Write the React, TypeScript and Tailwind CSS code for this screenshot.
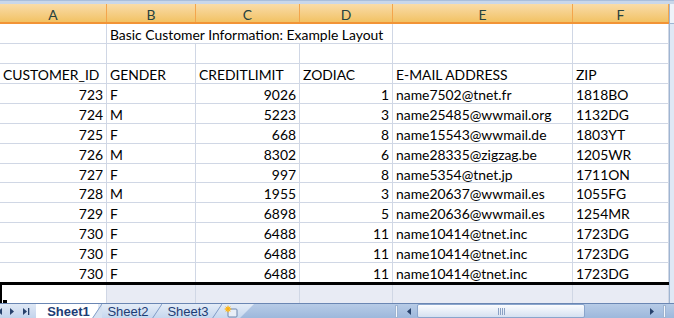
import React from 'react'

const cols = [107, 89, 104, 93, 180, 96]
const letters = ['A', 'B', 'C', 'D', 'E', 'F']

type Row = [number, string, number, number, string, string]

const rows: Row[] = [
  [723, 'F', 9026, 1, 'name7502@tnet.fr', '1818BO'],
  [724, 'M', 5223, 3, 'name25485@wwmail.org', '1132DG'],
  [725, 'F', 668, 8, 'name15543@wwmail.de', '1803YT'],
  [726, 'M', 8302, 6, 'name28335@zigzag.be', '1205WR'],
  [727, 'F', 997, 8, 'name5354@tnet.jp', '1711ON'],
  [728, 'M', 1955, 3, 'name20637@wwmail.es', '1055FG'],
  [729, 'F', 6898, 5, 'name20636@wwmail.es', '1254MR'],
  [730, 'F', 6488, 11, 'name10414@tnet.inc', '1723DG'],
  [730, 'F', 6488, 11, 'name10414@tnet.inc', '1723DG'],
  [730, 'F', 6488, 11, 'name10414@tnet.inc', '1723DG'],
]

const headers = ['CUSTOMER_ID', 'GENDER', 'CREDITLIMIT', 'ZODIAC', 'E-MAIL ADDRESS', 'ZIP']

function Cell({ w, right, children }: { w: number; right?: boolean; children?: React.ReactNode }) {
  return (
    <div
      style={{ width: w }}
      className={`shrink-0 h-full flex items-end pb-[1px] whitespace-nowrap overflow-hidden px-[3px] border-r border-[#d0d7e5] ${right ? 'justify-end' : ''}`}
    >
      {children}
    </div>
  )
}

function GridRow({ values, last }: { values: (string | number)[]; last?: boolean }) {
  return (
    <div className={`flex ${last ? 'h-[19px]' : 'h-[20px] border-b border-[#d0d7e5]'}`}>
      {values.map((v, i) => (
        <Cell key={i} w={cols[i]} right={typeof v === 'number'}>{v}</Cell>
      ))}
    </div>
  )
}

function Arrow({ dir, bar }: { dir: 'l' | 'r'; bar?: boolean }) {
  return (
    <svg width="8" height="9" viewBox="0 0 8 9">
      {dir === 'r' ? <path d="M1 1 L5 4.5 L1 8 Z" fill="#27416b" /> : <path d="M6 1 L2 4.5 L6 8 Z" fill="#27416b" />}
      {bar && <rect x="6" y="1" width="1.3" height="7" fill="#27416b" />}
    </svg>
  )
}

export default function App() {
  return (
    <div className="w-[674px] h-[318px] overflow-hidden bg-white text-black font-['Lato',sans-serif] text-[13.9px] leading-none">
      <div className="h-[4px] bg-[#c9d7ea] border-t border-[#a9bedb]" />
      <div className="flex h-[299px]">
        <div className="w-[669px] flex flex-col">
          {/* column header */}
          <div className="flex h-[20px] bg-gradient-to-b from-[#f9dca8] to-[#f2c263] border-b-2 border-[#f29436]">
            {cols.map((w, i) => (
              <div
                key={i}
                style={{ width: w }}
                className="shrink-0 flex items-center justify-center pt-[3px] text-[#27413e] border-r border-[#f3a54c]"
              >
                {letters[i]}
              </div>
            ))}
          </div>
          {/* title row */}
          <div className="flex h-[20px] border-b border-[#d0d7e5]">
            <Cell w={cols[0]} />
            <div style={{ width: cols[1] + cols[2] + cols[3] }} className="shrink-0 flex items-end pb-[1px] px-[3px] whitespace-nowrap border-r border-[#d0d7e5]">
              Basic Customer Information: Example Layout
            </div>
            <Cell w={cols[4]} />
            <Cell w={cols[5]} />
          </div>
          <GridRow values={['', '', '', '', '', '']} />
          <GridRow values={headers} />
          {rows.map((r, i) => (
            <GridRow key={i} values={r} last={i === rows.length - 1} />
          ))}
          <div className="h-[3px] bg-black" />
          {/* row after the border */}
          <div className="flex h-[18px] bg-[#e8ebf4]">
            <div className="w-[107px] shrink-0 bg-white border-l-2 border-black relative border-r border-r-[#d0d7e5]">
              <div className="absolute left-[1px] bottom-0 w-[4px] h-[3px] bg-black" />
            </div>
            {cols.slice(1).map((w, i) => (
              <div key={i} style={{ width: w }} className="shrink-0 border-r border-[#d0d7e5]" />
            ))}
          </div>
        </div>
        {/* vertical scrollbar edge */}
        <div className="w-[5px] bg-[#dfe8f5] border-l border-[#9fb5d2] flex flex-col">
          <div className="h-[20px] border-b border-[#9fb5d2] bg-[#eef3fa]" />
        </div>
      </div>
      {/* sheet tab strip */}
      <div className="flex h-[15px] border-t border-[#6a86b3] bg-gradient-to-b from-[#b7cbe6] to-[#9db8dc] font-['Liberation_Sans',sans-serif] text-[13px]">
        <div className="w-[40px] shrink-0 flex items-center gap-[5px] -ml-[4px] bg-gradient-to-b from-[#dfe8f5] to-[#c3d4ec]">
          <Arrow dir="l" />
          <Arrow dir="r" />
          <Arrow dir="r" bar />
        </div>
        <div className="relative w-[218px] shrink-0 flex bg-gradient-to-b from-[#e4ecf7] to-[#c6d7ee] [clip-path:polygon(0_0,100%_0,calc(100%-14px)_100%,0_100%)]">
          <div className="w-[62px] shrink-0 bg-white flex items-center justify-center font-bold text-[#1d3c74] pl-[3px]">Sheet1</div>
          <svg width="10" height="15" viewBox="0 0 10 15" className="shrink-0 -ml-[6px]">
            <path d="M0 15 L10 0 L10 15 Z" fill="#d5e1f1" />
            <path d="M0 15 L10 0" stroke="#7f9bc6" strokeWidth="1" />
          </svg>
          <div className="w-[52px] shrink-0 flex items-center justify-center text-[#1d3c74]">Sheet2</div>
          <svg width="10" height="15" viewBox="0 0 10 15" className="shrink-0 -ml-[2px]">
            <path d="M0 15 L10 0" stroke="#7f9bc6" strokeWidth="1" />
          </svg>
          <div className="w-[52px] shrink-0 flex items-center justify-center text-[#1d3c74]">Sheet3</div>
          <svg width="10" height="15" viewBox="0 0 10 15" className="shrink-0 -ml-[2px]">
            <path d="M0 15 L10 0" stroke="#7f9bc6" strokeWidth="1" />
          </svg>
          <div className="flex items-center pl-[2px]">
            <svg width="14" height="13" viewBox="0 0 14 13">
              <rect x="4" y="4" width="9" height="8" rx="1" fill="#e8eef7" stroke="#6d86ad" />
              <circle cx="4" cy="4" r="2.6" fill="#ffcc33" />
              <path d="M4 0.5V7.5M0.5 4H7.5M1.6 1.6L6.4 6.4M6.4 1.6L1.6 6.4" stroke="#f8a91a" strokeWidth="0.8" />
            </svg>
          </div>
        </div>
        <div className="flex-1" />
        {/* horizontal scrollbar */}
        <div className="w-[279px] shrink-0 flex items-center">
          <div className="w-[3px] h-[13px] bg-[#f4f7fb] border border-[#9fb5d2] mr-[7px]" />
          <Arrow dir="l" />
          <div className="ml-[4px] w-[168px] h-[14px] rounded-[2px] border border-[#8aa5cc] bg-gradient-to-b from-[#fbfcfe] to-[#d5e1f1] flex items-center justify-center">
            <div className="flex gap-[1px]">
              <div className="w-[1px] h-[7px] bg-[#8aa1c4]" />
              <div className="w-[1px] h-[7px] bg-[#8aa1c4]" />
              <div className="w-[1px] h-[7px] bg-[#8aa1c4]" />
              <div className="w-[1px] h-[7px] bg-[#8aa1c4]" />
            </div>
          </div>
          <div className="flex-1" />
          <Arrow dir="r" />
          <div className="w-[3px] h-[13px] bg-[#f4f7fb] border border-[#9fb5d2] ml-[6px] mr-[8px]" />
        </div>
      </div>
    </div>
  )
}
